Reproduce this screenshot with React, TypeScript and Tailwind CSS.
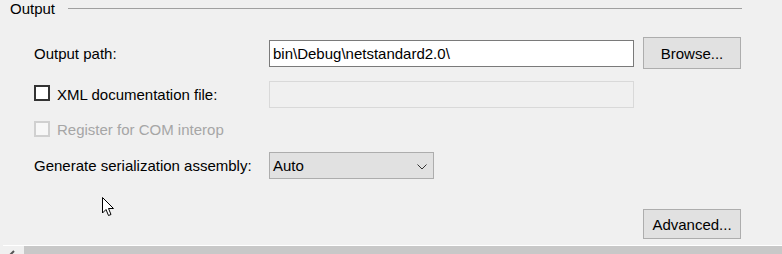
import React from "react";

export default function App() {
  return (
    <div
      className="relative w-[782px] h-[254px] overflow-hidden bg-[#f0f0f0] text-[15px] text-black flex flex-col"
      style={{ fontFamily: '"Liberation Sans", Arial, sans-serif' }}
    >
      {/* Group header */}
      <div className="flex items-center h-[16px] pl-[10px] pr-[40px] shrink-0">
        <span className="leading-none">Output</span>
        <div className="flex-1 h-px bg-[#a0a0a0] ml-[13px]" />
      </div>

      {/* Output path */}
      <div className="flex items-center h-[32px] mt-[21px] pl-[34px] shrink-0">
        <span className="w-[235px] leading-none">Output path:</span>
        <div className="w-[365px] h-[27px] bg-white border border-[#7a7a7a] flex items-center px-[3px] leading-none">
          bin\Debug\netstandard2.0\
        </div>
        <button className="ml-[9px] w-[98px] h-[32px] bg-[#e1e1e1] border border-[#adadad] leading-none">
          Browse...
        </button>
      </div>

      {/* XML documentation */}
      <div className="flex items-center h-[27px] mt-[12px] pl-[34px] shrink-0">
        <div className="w-[235px] flex items-center">
          <span className="w-[16px] h-[16px] border-2 border-[#333333] bg-white mr-[7px] -mt-[3px]" />
          <span className="leading-none">XML documentation file:</span>
        </div>
        <div className="w-[365px] h-[27px] border border-[#d9d9d9] bg-[#f0f0f0]" />
      </div>

      {/* Register for COM interop */}
      <div className="flex items-center h-[16px] mt-[13px] pl-[34px] shrink-0 text-[#a6a6a6]">
        <span className="w-[16px] h-[16px] border-2 border-[#d0d0d0] bg-[#f7f7f7] mr-[7px]" />
        <span className="leading-none">Register for COM interop</span>
      </div>

      {/* Generate serialization assembly */}
      <div className="flex items-center h-[27px] mt-[15px] pl-[34px] shrink-0">
        <span className="w-[235px] leading-none">Generate serialization assembly:</span>
        <div className="w-[165px] h-[27px] bg-[#e1e1e1] border border-[#adadad] flex items-center justify-between pl-[3px] pr-[6px] leading-none">
          <span>Auto</span>
          <svg width="10" height="6" viewBox="0 0 10 6" className="mt-[2px]">
            <path d="M0.5 0.5 L5 5 L9.5 0.5" fill="none" stroke="#333" strokeWidth="1" />
          </svg>
        </div>
      </div>

      {/* Advanced */}
      <div className="flex justify-end pr-[41px] mt-[30px] shrink-0">
        <button className="w-[98px] h-[30px] bg-[#e1e1e1] border border-[#adadad] leading-none">
          Advanced...
        </button>
      </div>

      {/* Bottom scrollbar */}
      <div className="mt-[6px] ml-[3px] h-px bg-white shrink-0" />
      <div className="flex h-[9px] shrink-0">
        <div className="w-[24px] bg-[#f0f0f0] flex items-end justify-center">
          <svg width="8" height="6" viewBox="0 0 8 6">
            <path d="M2 6 L6 2" stroke="#555" strokeWidth="2" fill="none" />
          </svg>
        </div>
        <div className="flex-1 bg-[#c8c8c8]" />
      </div>

      {/* Mouse cursor */}
      <svg
        className="absolute left-[101px] top-[196px]"
        width="14"
        height="22"
        viewBox="0 0 14 22"
      >
        <path
          d="M1.5 1.5 L1.5 17 L5 13.5 L7.5 19.5 L10 18.5 L7.5 12.5 L12.5 12.5 Z"
          fill="white"
          stroke="black"
          strokeWidth="1"
          strokeLinejoin="miter"
        />
      </svg>
    </div>
  );
}
